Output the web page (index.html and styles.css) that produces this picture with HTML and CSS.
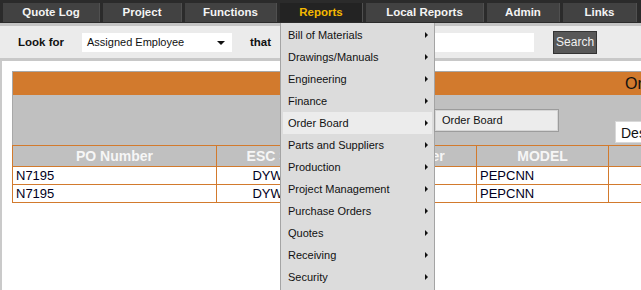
FILE: index.html
```html
<!DOCTYPE html>
<html>
<head>
  <meta charset="UTF-8">
  <title>Order Board</title>
  <link rel="stylesheet" href="styles.css">
</head>
<body>
  <div class="nav">
    <a class="tab tab-quote">Quote Log</a>
    <a class="tab tab-project">Project</a>
    <a class="tab tab-functions">Functions</a>
    <a class="tab tab-reports active">Reports</a>
    <a class="tab tab-local">Local Reports</a>
    <a class="tab tab-admin">Admin</a>
    <a class="tab tab-links">Links</a>
  </div>

  <div class="search-bar">
    <span class="label">Look for</span>
    <div class="select field-select">Assigned Employee<span class="caret"></span></div>
    <span class="label">that</span>
    <div class="text-input"></div>
    <button class="search-btn">Search</button>
  </div>

  <div class="content">
    <div class="panel">
      <div class="panel-title">Order Board</div>
      <div class="panel-tools">
        <div class="sort-select">Descending</div>
      </div>
      <table class="board">
        <thead>
          <tr>
            <th class="col-po">PO Number</th>
            <th class="col-esc">ESC Serial</th>
            <th class="col-cust">Customer</th>
            <th class="col-model">MODEL</th>
            <th>Status</th>
          </tr>
        </thead>
        <tbody>
          <tr>
            <td>N7195</td>
            <td class="center">DYW0016</td>
            <td></td>
            <td>PEPCNN</td>
            <td></td>
          </tr>
          <tr>
            <td>N7195</td>
            <td class="center">DYW0016</td>
            <td></td>
            <td>PEPCNN</td>
            <td></td>
          </tr>
        </tbody>
      </table>
    </div>
  </div>

  <!-- Reports dropdown -->
  <ul class="menu">
    <li>Bill of Materials<span class="arrow"></span></li>
    <li>Drawings/Manuals<span class="arrow"></span></li>
    <li>Engineering<span class="arrow"></span></li>
    <li>Finance<span class="arrow"></span></li>
    <li class="hover">Order Board<span class="arrow"></span>
      <ul class="submenu">
        <li>Order Board</li>
      </ul>
    </li>
    <li>Parts and Suppliers<span class="arrow"></span></li>
    <li>Production<span class="arrow"></span></li>
    <li>Project Management<span class="arrow"></span></li>
    <li>Purchase Orders<span class="arrow"></span></li>
    <li>Quotes<span class="arrow"></span></li>
    <li>Receiving<span class="arrow"></span></li>
    <li>Security<span class="arrow"></span></li>
  </ul>
</body>
</html>
```

FILE: styles.css
```css
:root {
  --nav-bg: #2b2b2b;
  --tab-bg: #424242;
  --orange: #d27a2d;
  --panel-gray: #c0c0c0;
  --menu-bg: #dcdcdc;
}

body {
  margin: 0;
  font-family: 'Liberation Sans', Arial, sans-serif;
  background-color: white;
  overflow: hidden;
  position: relative;
  min-height: 290px;
}

/* top navigation */
.nav {
  display: flex;
  gap: 3px;
  height: 26px;
  padding: 3px 0 0 3px;
  box-sizing: border-box;
  background-color: var(--nav-bg);
  border-bottom: 3px solid #c4c4c4;
}

.tab {
  height: 19px;
  line-height: 19px;
  text-align: center;
  color: #f4f4f4;
  font-weight: bold;
  font-size: 11.5px;
  background-color: var(--tab-bg);
  border-right: 1px solid #505050;
  box-sizing: border-box;
}

.tab.active {
  background-color: #232323;
  color: #f4b800;
}

.tab-quote { width: 97px; }
.tab-project { width: 79px; }
.tab-functions { width: 92px; }
.tab-reports { width: 83px; }
.tab-local { width: 118px; }
.tab-admin { width: 73px; }
.tab-links { width: 74px; }

/* search row */
.search-bar {
  display: flex;
  align-items: center;
  gap: 18px;
  height: 32px;
  padding-left: 18px;
  background-color: #ebebeb;
  border-bottom: 3px solid #c8c8c8;
}

.label {
  font-weight: bold;
  font-size: 11.5px;
  color: #111;
}

.select {
  position: relative;
  width: 150px;
  height: 19px;
  line-height: 19px;
  padding-left: 5px;
  box-sizing: border-box;
  background-color: white;
  font-size: 11px;
  color: #111;
}

.caret {
  position: absolute;
  right: 7px;
  top: 8px;
  border-left: 4px solid transparent;
  border-right: 4px solid transparent;
  border-top: 4px solid #111;
}

.text-input {
  width: 245px;
  height: 19px;
  background-color: white;
}

.search-btn {
  height: 23px;
  width: 44px;
  padding: 0;
  margin-left: 1px;
  background-color: #585858;
  border: 1px solid #333;
  color: #f0f0f0;
  font-family: inherit;
  font-size: 12px;
}

/* content */
.content {
  border-left: 2px solid #cacaca;
  padding: 10px 0 0 10px;
  height: 240px;
}

.panel {
  width: 1320px;
  background-color: var(--panel-gray);
  border-top: 1px solid #a8a8a8;
  border-left: 1px solid #a8a8a8;
}

.panel-title {
  height: 23px;
  line-height: 24px;
  padding-right: 8px;
  background-color: var(--orange);
  text-align: center;
  font-size: 16px;
  color: #111;
}

.panel-tools {
  height: 50px;
  display: flex;
  align-items: flex-end;
  padding-bottom: 2px;
  box-sizing: border-box;
}

.sort-select {
  margin-left: 602px;
  width: 110px;
  height: 22px;
  line-height: 22px;
  padding-left: 5px;
  box-sizing: border-box;
  background-color: white;
  border: 1px solid #d8d8d8;
  font-size: 14px;
  color: #111;
}

.board {
  border-collapse: collapse;
  width: 1320px;
  margin-left: -1px;
  background-color: white;
}

.board th,
.board td {
  border: 1px solid var(--orange);
  padding: 0 3px;
  text-align: left;
}

.board th {
  height: 20px;
  background-color: var(--panel-gray);
  color: #f6f6f6;
  font-size: 14px;
  text-align: center;
}

.board td {
  height: 17px;
  font-size: 13px;
  color: #000022;
}

.board td.center {
  text-align: center;
}

.col-po { width: 197px; }
.col-esc { width: 124px; }
.col-cust { width: 122px; }
.col-model { width: 125px; }

/* dropdown menu */
.menu {
  position: absolute;
  left: 280px;
  top: 23px;
  width: 155px;
  height: 270px;
  margin: 0;
  padding: 1px 2px 0;
  box-sizing: border-box;
  list-style: none;
  background-color: var(--menu-bg);
  border-left: 1px solid #a4a4a4;
  border-right: 1px solid #a4a4a4;
}

.menu li {
  position: relative;
  height: 22px;
  line-height: 22px;
  padding-left: 5px;
  font-size: 11px;
  color: #111;
}

.menu li.hover {
  background-color: #ececec;
}

.arrow {
  position: absolute;
  right: 4px;
  top: 8px;
  border-top: 3px solid transparent;
  border-bottom: 3px solid transparent;
  border-left: 3px solid #111;
}

.submenu {
  position: absolute;
  left: 151px;
  top: -3px;
  width: 125px;
  height: 23px;
  margin: 0;
  padding: 0;
  list-style: none;
  box-sizing: border-box;
  background-color: #ececec;
  border: 1px solid #9c9c9c;
  box-shadow: inset 0 0 0 1px #d6d6d6;
}

.submenu li {
  height: 21px;
  line-height: 21px;
  padding-left: 7px;
}
```
